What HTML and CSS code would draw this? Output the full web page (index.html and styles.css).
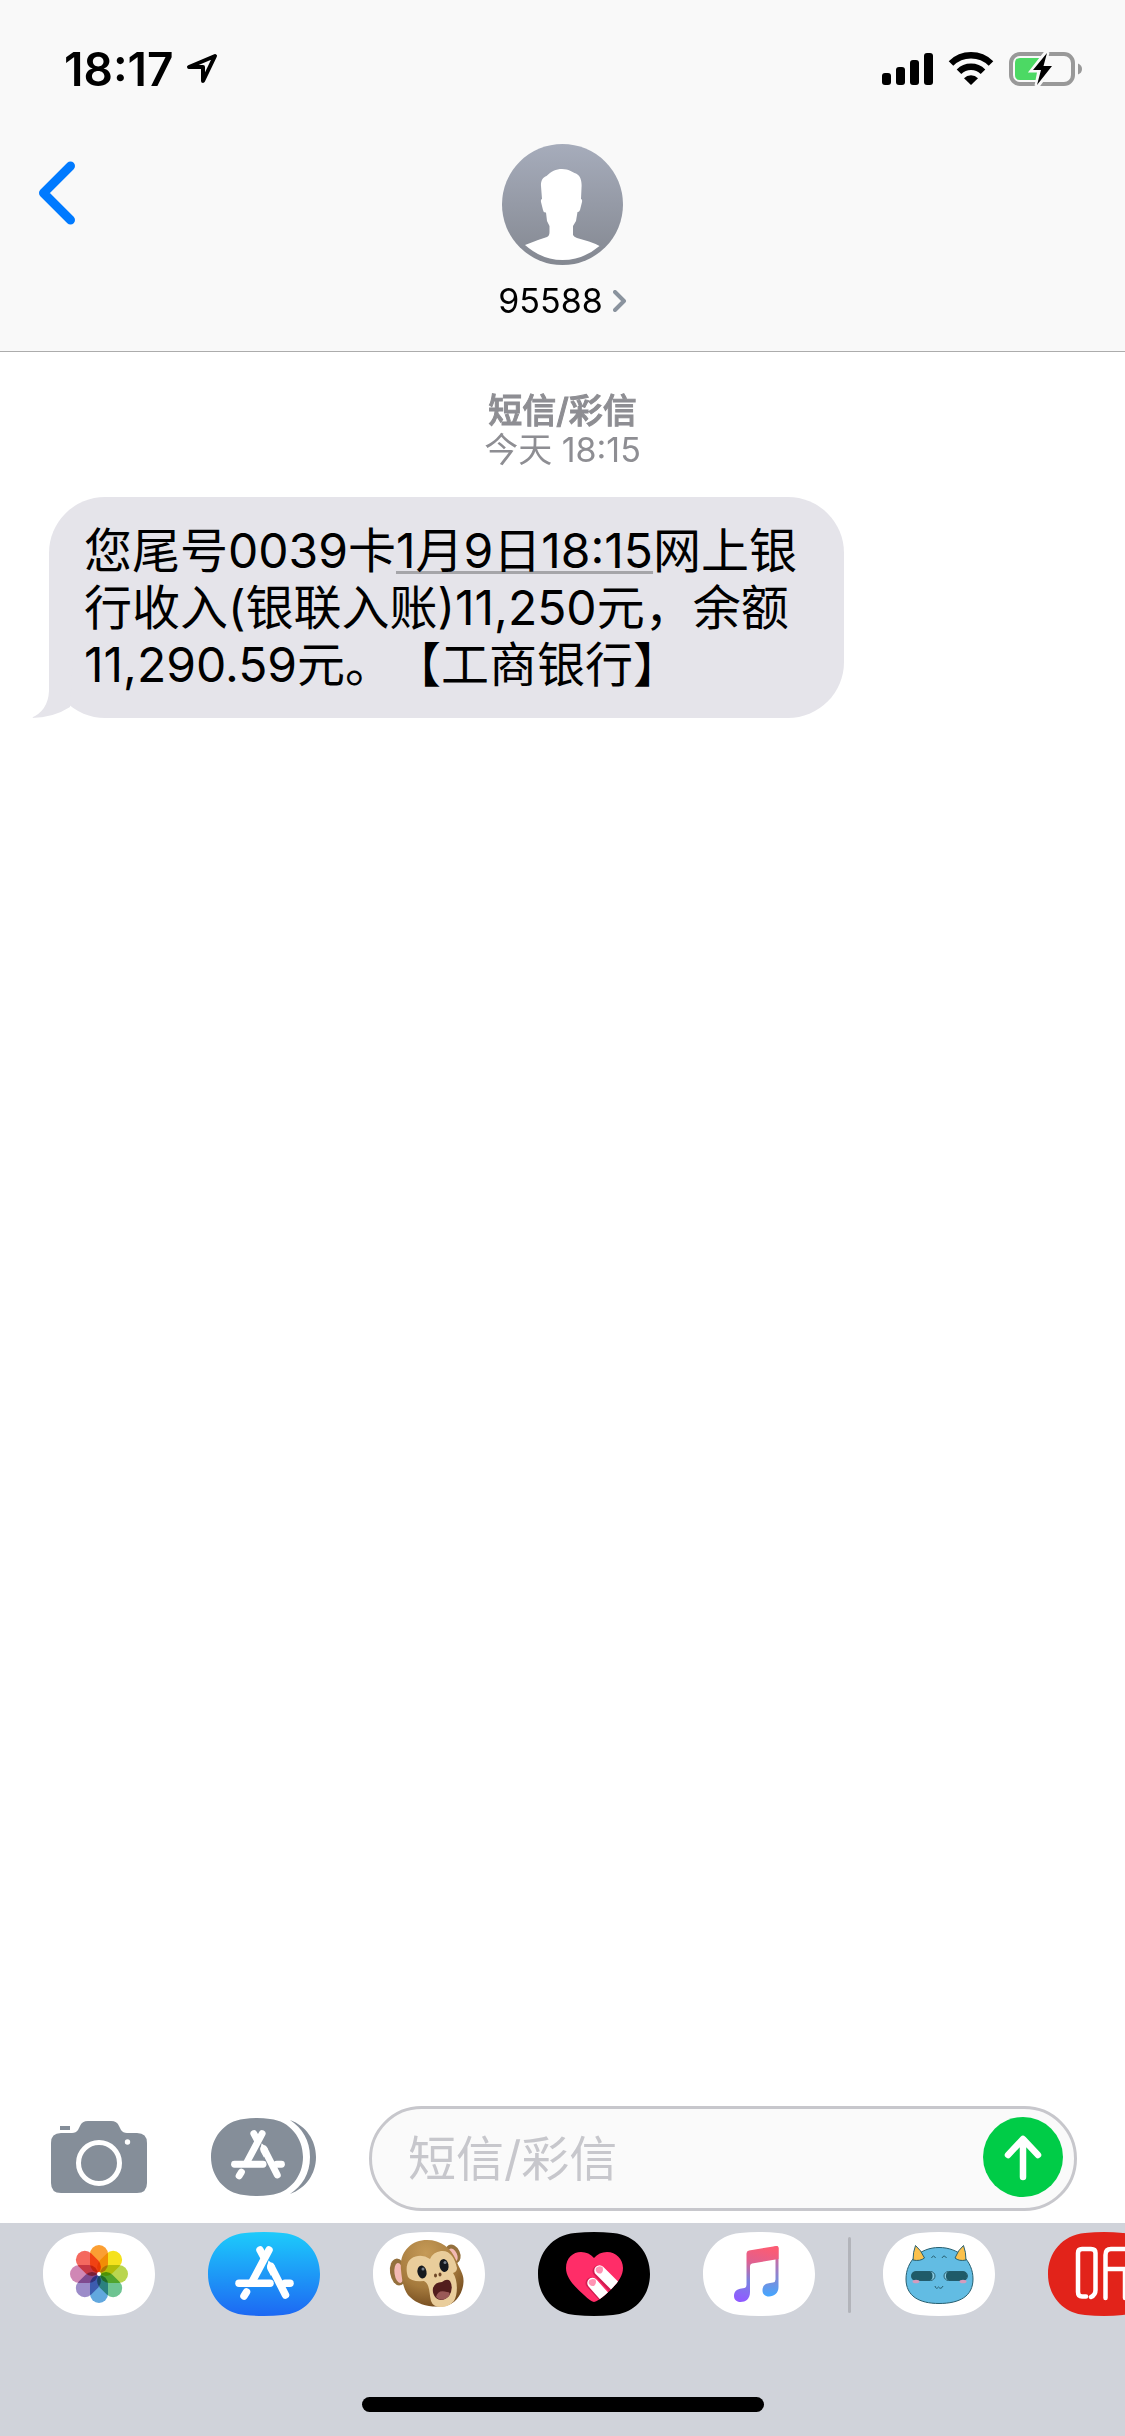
FILE: index.html
```html
<!DOCTYPE html>
<html lang="zh-CN">
<head>
  <meta charset="UTF-8">
  <meta name="viewport" content="width=device-width, initial-scale=1.0">
  <title>95588</title>
  <link rel="stylesheet" href="styles.css">
</head>
<body>
  <header class="header">
    <div class="status-bar">
      <div class="status-left">
        <span class="clock">18:17</span>
        <svg class="location" width="32" height="32" viewBox="0 0 32 32">
          <path d="M29 3 L3 14 H17 V28 Z" fill="none" stroke="#000" stroke-width="4" stroke-linejoin="round"/>
        </svg>
      </div>
      <div class="status-right">
        <svg width="51" height="32" viewBox="0 0 51 32">
          <rect x="0" y="20" width="9" height="12" rx="3"/>
          <rect x="14" y="14" width="9" height="18" rx="3"/>
          <rect x="28" y="7" width="9" height="25" rx="3"/>
          <rect x="42" y="0" width="9" height="32" rx="3"/>
        </svg>
        <svg width="46" height="34" viewBox="0 0 46 34">
          <path d="M3 11.5 A28.5 28.5 0 0 1 43 11.5" fill="none" stroke="#000" stroke-width="6.5"/>
          <path d="M11 19.8 A17 17 0 0 1 35 19.8" fill="none" stroke="#000" stroke-width="6.5"/>
          <path d="M23 33 L16 26.2 A10 10 0 0 1 30 26.2 Z"/>
        </svg>
        <svg width="73" height="34" viewBox="0 0 73 34">
          <rect x="2" y="2" width="62" height="30" rx="9" fill="none" stroke="#999" stroke-width="4"/>
          <path d="M69 11.5 Q73 13 73 17 T69 22.500 Z" fill="#999"/>
          <path d="M11 6 H36 V28 H11 Q6 28 6 23 V11 Q6 6 11 6 Z" fill="#4cd964"/>
          <path d="M38 0 L24 18 H31 L28 34 L43 14 H35 Z" fill="#f9f9f9" stroke="#f9f9f9" stroke-width="5"/>
          <path d="M38 1 L24 18 H32 L28 33 L43 14 H34.500 Z"/>
        </svg>
      </div>
    </div>
    <div class="nav">
      <button class="back" type="button" aria-label="返回">
        <svg width="38" height="64" viewBox="0 0 38 64">
          <path d="M32.500 5 L5.500 32 L32.500 59" fill="none" stroke="#007aff" stroke-width="9" stroke-linecap="round" stroke-linejoin="round"/>
        </svg>
      </button>
      <a class="contact" href="#">
        <svg width="121" height="121" viewBox="0 0 121 121">
          <defs>
            <linearGradient id="avatarFill" x1="0" y1="0" x2="0" y2="1">
              <stop offset="0" stop-color="#a6acbb"/>
              <stop offset="1" stop-color="#848891"/>
            </linearGradient>
          </defs>
          <circle cx="60.5" cy="60.5" r="60.5" fill="url(#avatarFill)"/>
          <path fill="#fff" d="M60 25 C67 25 70 28 74 29.500 C79 32 80 38 79.500 44 L79 55 Q80.500 55 80 58 L78 66 Q77 68.500 75.500 68 L74 77 L71 82 V91 Q72 93 75 94 L87 97.500 Q93 99.500 97.500 102 Q81 116 60.500 116 Q40 116 23 101 Q31 98 36 96 L45 93 Q47.500 92 47.500 88 V82 L45 77 L44 68.500 Q41.500 69 41 66 L39 58 Q38.500 55 40 55 L39 42 C38.500 37 41 33 44.500 32 C49 27.500 54 25 60 25 Z"/>
        </svg>
        <span class="contact-name">95588
          <svg width="14" height="22" viewBox="0 0 14 22">
            <path d="M2 2 L11 11 L2 20" fill="none" stroke="#8a939e" stroke-width="4" stroke-linecap="round" stroke-linejoin="round"/>
          </svg>
        </span>
      </a>
    </div>
  </header>

  <main class="messages">
    <div class="timestamp">
      <strong>短信/彩信</strong>
      <span>今天 18:15</span>
    </div>
    <div class="bubble">
      <svg class="tail" width="42" height="60" viewBox="0 0 42 60">
        <path d="M18 0 V33 Q17 53 0 60 Q22 60 39 49 L42 0 Z" fill="#e5e4ea"/>
      </svg>
      <p>您尾号0039卡<a href="#">1月9日18:15</a>网上银行收入(银联入账)11,250元，余额11,290.59元。【工商银行】</p>
    </div>
  </main>

  <footer>
    <form class="compose">
      <button type="button" aria-label="相机">
        <svg width="96" height="72" viewBox="0 0 96 72">
          <path fill="#858e99" d="M9 5 H19 V9 H9 Z M37 0 H60 Q66 0 68 5 L70 9 Q72 12 76 12 H86 Q96 12 96 22 V62 Q96 72 86 72 H10 Q0 72 0 62 V22 Q0 12 10 12 H21 Q25 12 27 9 L29 5 Q31 0 37 0 Z"/>
          <circle cx="48" cy="42" r="20.5" fill="none" stroke="#fff" stroke-width="5"/>
          <circle cx="76.5" cy="21" r="2.700" fill="#fff"/>
        </svg>
      </button>
      <button type="button" aria-label="App">
        <svg width="105" height="78" viewBox="0 0 105 78">
          <path fill="#858e99" d="M33 1 Q46 -1 59 1 C79 3 92 20 92 39 S79 75 59 77 Q46 79 33 77 C13 75 0 58 0 39 S13 3 33 1 Z"/>
          <path fill="#858e99" d="M79 2 C95 8 105 22 105 39 S95 70 79 76 C91 68 99 56 99 39 S91 10 79 2 Z"/>
          <use href="#storeMark" transform="translate(-5 -1) scale(.92)"/>
        </svg>
      </button>
      <div class="field">
        <input type="text" placeholder="短信/彩信" aria-label="短信/彩信">
        <button class="send" type="submit" aria-label="发送">
          <svg width="80" height="80" viewBox="0 0 80 80">
            <path d="M40 60 V23 M25 38 L40 22 L55 38" fill="none" stroke="#fff" stroke-width="6.5" stroke-linecap="round" stroke-linejoin="round"/>
          </svg>
        </button>
      </div>
    </form>

    <nav class="tray">
      <svg class="defs" width="0" height="0">
        <defs>
          <path id="pill" d="M37 1 Q56 -1 75 1 C98 3 112 21 112 42 S98 81 75 83 Q56 85 37 83 C14 81 0 63 0 42 S14 3 37 1 Z"/>
          <g id="storeMark" fill="none" stroke="#fff" stroke-width="7.500" stroke-linecap="round">
            <path d="M61 18 L44 50"/>
            <path d="M52 18 L55.500 24.500"/>
            <path d="M31 51.300 H62"/>
            <path d="M77 51.300 H82"/>
            <path d="M63 34.500 L77.500 63"/>
            <path d="M38.500 60 L36 64"/>
            <path fill="#fff" stroke="none" d="M60.500 28.500 L59 35 Q59 37 60 38.500 L63 44 L67 34 Z"/>
          </g>
          <linearGradient id="storeFill" x1="0" y1="0" x2="0" y2="1">
            <stop offset="0" stop-color="#1dcbfb"/>
            <stop offset="1" stop-color="#1d68f3"/>
          </linearGradient>
          <radialGradient id="fur" cx=".4" cy=".2" r=".85">
            <stop offset="0" stop-color="#c59a57"/>
            <stop offset=".6" stop-color="#a57a3d"/>
            <stop offset="1" stop-color="#71491d"/>
          </radialGradient>
          <linearGradient id="noteFill" gradientUnits="userSpaceOnUse" x1="62" y1="16" x2="48" y2="70">
            <stop offset="0" stop-color="#fb5c74"/>
            <stop offset=".3" stop-color="#e0608f"/>
            <stop offset=".65" stop-color="#7a83e0"/>
            <stop offset="1" stop-color="#8f5cff"/>
          </linearGradient>
          <linearGradient id="noteFillRight" gradientUnits="userSpaceOnUse" x1="0" y1="16" x2="0" y2="64">
            <stop offset="0" stop-color="#f75d7b"/>
            <stop offset=".4" stop-color="#a878bd"/>
            <stop offset="1" stop-color="#44a6ff"/>
          </linearGradient>
          <clipPath id="heartClip">
            <path d="M56 70 Q52 69 46 63 C36 54 28 46 28 36 C28 26 35 20 43 20 Q51 20 56 26 Q61 20 69 20 C78 20 85 27 85 36 C85 46 77 54 67 63 Q60 69 56 70 Z"/>
          </clipPath>
        </defs>
      </svg>

      <button type="button" aria-label="照片">
        <svg class="petals" width="112" height="84" viewBox="0 0 112 84">
          <use href="#pill" fill="#fff"/>
          <g transform="translate(56 42)">
            <rect x="-9" y="-29" width="18" height="28" rx="9" fill="#fb9f33"/>
            <rect x="-9" y="-29" width="18" height="28" rx="9" fill="#f5e21d" transform="rotate(45)"/>
            <rect x="-9" y="-29" width="18" height="28" rx="9" fill="#b9d64f" transform="rotate(90)"/>
            <rect x="-9" y="-29" width="18" height="28" rx="9" fill="#6ec492" transform="rotate(135)"/>
            <rect x="-9" y="-29" width="18" height="28" rx="9" fill="#62a8de" transform="rotate(180)"/>
            <rect x="-9" y="-29" width="18" height="28" rx="9" fill="#9c8cc9" transform="rotate(225)"/>
            <rect x="-9" y="-29" width="18" height="28" rx="9" fill="#d087b5" transform="rotate(270)"/>
            <rect x="-9" y="-29" width="18" height="28" rx="9" fill="#f4695f" transform="rotate(315)"/>
          </g>
          <circle cx="56" cy="42" r="2" fill="#fff"/>
        </svg>
      </button>

      <button type="button" aria-label="App Store">
        <svg width="112" height="84" viewBox="0 0 112 84">
          <use href="#pill" fill="url(#storeFill)"/>
          <use href="#storeMark"/>
        </svg>
      </button>

      <button type="button" aria-label="拟我表情">
        <svg width="112" height="84" viewBox="0 0 112 84">
          <use href="#pill" fill="#fff"/>
          <ellipse cx="25" cy="40" rx="8" ry="13.500" fill="#94703d" transform="rotate(-8 25 40)"/>
          <ellipse cx="26" cy="41" rx="4.500" ry="10" fill="#f3b9b4" transform="rotate(-8 26 41)"/>
          <ellipse cx="80" cy="22" rx="7" ry="10" fill="#94703d" transform="rotate(-25 80 22)"/>
          <ellipse cx="80" cy="23" rx="4" ry="7" fill="#f3b9b4" transform="rotate(-25 80 23)"/>
          <path fill="url(#fur)" d="M28 38 C26 20 38 8 54 8 C68 8 78 16 83 28 C87 38 91 42 90.500 50 C90 61 83 72 72 74 C58 76 45 73 37 65 C31 60 29 49 28 38 Z"/>
          <path fill="#e9cd9b" d="M35 45 C31 33 36 25 45 24 Q51 23 57 27 Q60 20 68 19 C77 18 82 26 84 36 Q84 40 80 41 C85 48 85 62 81 69 Q76 75 68 75 Q60 75 58 69 C56 61 57 52 51 49 Q38 50 35 45 Z"/>
          <ellipse cx="49" cy="40" rx="4.500" ry="6.500" fill="#15191e" transform="rotate(-12 49 40)"/>
          <ellipse cx="71" cy="33.500" rx="4.500" ry="6.500" fill="#15191e" transform="rotate(-12 71 33.500)"/>
          <circle cx="50" cy="37" r="1.500" fill="#76808c"/>
          <circle cx="72" cy="30.500" r="1.500" fill="#76808c"/>
          <ellipse cx="62.500" cy="43.500" rx="1.500" ry="2" fill="#704828"/>
          <ellipse cx="67" cy="42.500" rx="1.500" ry="2" fill="#704828"/>
          <path fill="#521d1d" d="M60 56 Q62 50 69 50 Q74 46 77 49 Q81 56 76 64 Q69 71 63 66 Q59 62 60 56 Z"/>
          <path fill="#9a5957" d="M63 65 Q65 57 74 60 Q78 60 76 64 Q69 71 63 65 Z"/>
        </svg>
      </button>

      <button type="button" aria-label="Digital Touch">
        <svg width="112" height="84" viewBox="0 0 112 84">
          <use href="#pill" fill="#000"/>
          <g clip-path="url(#heartClip)">
            <rect width="112" height="84" fill="#ff2d68"/>
            <g stroke-linecap="round">
              <path d="M60 39 L80 61 M53 51 L73 73" stroke="#d11c50" stroke-width="11"/>
              <path d="M61.500 38.500 L83 60 M54.500 51 L75 74" stroke="#fff" stroke-width="10.500"/>
            </g>
            <path fill="#ff94b4" d="M58 36 Q61 33 64.500 35 Q66 39 63 41.500 Q60 42 58.500 40 Q57 38 58 36 Z M51 48.500 Q54 46 57.500 47.500 Q59 51 56 54 Q53 54.500 51.500 52.500 Q50 50.500 51 48.500 Z"/>
          </g>
        </svg>
      </button>

      <button type="button" aria-label="音乐">
        <svg width="112" height="84" viewBox="0 0 112 84">
          <use href="#pill" fill="#fff"/>
          <path fill="url(#noteFillRight)" d="M70 15 L73.500 14 Q75.500 14 75.500 16 V55 C75.500 61 71 64.500 66 64.500 C62 64.500 59.500 62 59.500 58.500 C59.500 53 63 51.500 67 51 L70 50.500 Q72.500 50 72.500 47.500 V27 L70 27 Z"/>
          <path fill="url(#noteFill)" d="M46 18.500 L73.500 14 Q75.500 14 75.500 16 L75.500 27 L49 31.500 Q47 32 47 34 V60 C47 67 42.500 70 37.500 70 C33.500 70 31 67.500 31 64 C31 59 34.500 57 38.500 56.500 L41.500 56 Q43.500 55.500 43.500 53 V21.500 Q43.500 19 46 18.500 Z"/>
        </svg>
      </button>

      <span class="divider"></span>

      <button type="button" aria-label="表情贴纸">
        <svg width="112" height="84" viewBox="0 0 112 84">
          <use href="#pill" fill="#fff"/>
          <g stroke="#275f70" stroke-width="1">
            <path fill="#62bce3" d="M56 15.500 C76 15.500 90 29 90 47 C90 64 77 71.500 56 71.500 C36 71.500 23 64 23 47 C23 29 37 15.500 56 15.500 Z"/>
            <path fill="#fbc14d" d="M32.500 13.500 Q38 18 41.500 26 Q37 29.500 30 28 Q30 20 32.500 13.500 Z M80.500 13.500 Q75 18 72 26 Q76 29.500 83 28 Q83 20 80.500 13.500 Z"/>
            <path fill="none" d="M48.500 26 Q50.500 22 52.500 26 M59 26 Q61 22 63.500 26 M52 54 Q53 58 55.500 55 Q58 58 60 54"/>
            <rect x="28.500" y="39.500" width="23.500" height="9" rx="4.500" fill="#8ccde4"/>
            <rect x="61" y="39.500" width="23.500" height="9" rx="4.500" fill="#8ccde4"/>
          </g>
          <rect x="28.500" y="39.500" width="21" height="9" rx="4" fill="#1f5b69"/>
          <rect x="63" y="39.500" width="21" height="9" rx="4" fill="#1f5b69"/>
          <ellipse cx="33" cy="49.500" rx="3.500" ry="1.800" fill="#d49bbd"/>
          <ellipse cx="80" cy="49.500" rx="3.500" ry="1.800" fill="#d49bbd"/>
        </svg>
      </button>

      <button type="button" aria-label="听书">
        <svg width="112" height="84" viewBox="0 0 112 84">
          <use href="#pill" fill="#e2231a"/>
          <g fill="none" stroke="#fff" stroke-width="4.500" stroke-linecap="round">
            <path d="M38 64.500 H34 Q30 64.500 30 60 V21 Q30 17 34 17 H43 Q47.500 17 47.500 21 V58 Q47.500 63 43 65"/>
            <path d="M57.500 66 V23 Q57.500 17 63 17 H86 M58 37 H88 M77 38 V66"/>
          </g>
        </svg>
      </button>
    </nav>
    <div class="home-area"><span class="home-indicator"></span></div>
  </footer>
</body>
</html>
```

FILE: styles.css
```css
* {
  box-sizing: border-box;
}
body {
  margin: 0;
  min-height: 100vh;
  display: flex;
  flex-direction: column;
  background: #fff;
  color: #000;
  font-family: Inter, "Noto Sans CJK SC", sans-serif;
  overflow-x: hidden;
}
svg {
  display: block;
}
button {
  padding: 0;
  border: 0;
  background: none;
  cursor: pointer;
}

/* status bar and contact */
.header {
  background: #f9f9f9;
  border-bottom: 1px solid #acacac;
}
.status-bar {
  display: flex;
  justify-content: space-between;
  align-items: center;
  height: 138px;
  padding: 0 43px 0 64px;
}
.status-left {
  display: flex;
  align-items: center;
  gap: 12px;
}
.clock {
  font-size: 46px;
  font-weight: 600;
  line-height: 56px;
}
.status-right {
  display: flex;
  align-items: center;
  gap: 15px;
}
.nav {
  display: grid;
  grid-template-columns: 1fr auto 1fr;
  align-items: start;
  padding: 6px 38px 28px;
}
.back {
  justify-self: start;
  padding-top: 17px;
}
.contact {
  display: flex;
  flex-direction: column;
  align-items: center;
  gap: 14px;
  color: #000;
  text-decoration: none;
}
.contact-name {
  display: flex;
  align-items: center;
  gap: 10px;
  font-size: 34px;
  line-height: 44px;
}

/* conversation */
.messages {
  flex: 1;
  padding: 39px 16px 39px 49px;
}
.timestamp {
  display: flex;
  flex-direction: column;
  align-items: center;
  margin: 0 33px 28px 0;
  color: #8e8e93;
  font-size: 34px;
  line-height: 39px;
}
.timestamp strong {
  font-weight: 500;
  -webkit-text-stroke: 1px #8e8e93;
}
.bubble {
  position: relative;
  max-width: 75%;
  width: fit-content;
  padding: 25px 35px;
  border-radius: 56px;
  background: #e5e4ea;
  font-size: 48px;
  line-height: 57px;
}
.bubble p {
  margin: 0;
  text-spacing-trim: space-all;
}
.bubble a {
  color: inherit;
  text-decoration: underline 3px #a5a5a9;
  text-decoration-skip-ink: none;
  text-underline-offset: 3px;
}
.tail {
  position: absolute;
  left: -18px;
  bottom: 0;
}

/* message input */
.compose {
  display: flex;
  align-items: center;
  gap: 64px;
  padding: 12px 48px 12px 51px;
}
.compose button {
  margin-bottom: 3px;
}
.field {
  flex: 1;
  min-width: 0;
  display: flex;
  align-items: center;
  height: 105px;
  margin-left: -11px;
  padding: 0 11px 0 36px;
  border: 3px solid #c7c7cc;
  border-radius: 53px;
  background: #fafafa;
}
.field input {
  flex: 1;
  min-width: 0;
  padding: 0;
  border: 0;
  outline: 0;
  background: none;
  font: inherit;
  font-size: 48px;
}
.field input::placeholder {
  color: #c7c7cc;
  opacity: 1;
}
.send {
  border-radius: 50%;
  background: #00cc47;
}

/* app tray */
.tray {
  display: flex;
  gap: 53px;
  padding: 9px 0 0 43px;
  background: #d0d3da;
  overflow: hidden;
}
.tray button {
  flex: none;
}
.defs {
  position: absolute;
}
.petals rect {
  mix-blend-mode: multiply;
}
.divider {
  flex: none;
  width: 3px;
  height: 76px;
  margin: 5px -21px 0 -20px;
  border-radius: 2px;
  background: #b2b4ba;
}
.home-area {
  display: flex;
  justify-content: center;
  padding: 81px 0 24px;
  background: #d0d3da;
}
.home-indicator {
  width: 402px;
  height: 15px;
  border-radius: 8px;
  background: #000;
}
```
